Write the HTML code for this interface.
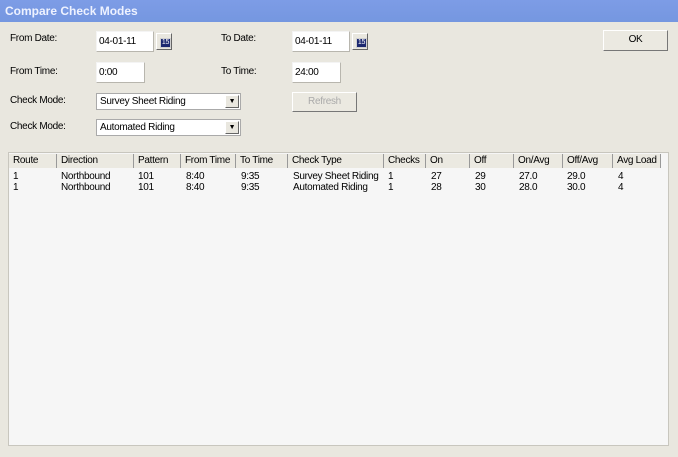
<!DOCTYPE html>
<html><head><style>
body{margin:0;width:678px;height:457px;background:#e9e7df;font-family:"Liberation Sans",sans-serif;font-size:10px;letter-spacing:-0.3px;color:#000;position:relative;overflow:hidden}
.a{position:absolute;white-space:nowrap}
.title{left:0;top:0;width:678px;height:22px;background:linear-gradient(#7d9ce6,#7597e0);color:#eef2ff;font-weight:bold;font-size:12px;line-height:22px;padding-left:5px;box-sizing:border-box;letter-spacing:0}
.in{background:#fff;border:1px solid #b8b6ae;border-top-color:#f4f4f4;border-left-color:#f4f4f4;box-sizing:border-box;padding:4px 0 0 2px;height:21px}
.btn{border:1px solid #fff;border-right-color:#777;border-bottom-color:#777;box-sizing:border-box;text-align:center;line-height:18px;background:#ebe9e1}
.cal{width:16px;height:17px;border:1px solid #fff;border-right-color:#666;border-bottom-color:#666;box-sizing:border-box}
.cal i{position:absolute;left:3px;top:4px;width:9px;height:8px;background:#1c2870;border:1px solid #d0d0d0;font-size:7px;color:#fff;font-style:normal;line-height:8px;text-align:center}
.combo{background:#fff;border:1px solid #aaa;box-sizing:border-box;height:17px;padding:2px 0 0 3px;width:145px}
.combo b{position:absolute;right:1px;top:1px;width:14px;height:13px;background:#e9e7df;border:1px solid #fff;border-right-color:#666;border-bottom-color:#666;box-sizing:border-box;font-size:7px;text-align:center;line-height:11px;font-weight:normal}
.list{left:8px;top:152px;width:661px;height:294px;background:#f6f6f6;border:1px solid #c8c6be;box-sizing:border-box}
.hd{top:1px;height:14px;line-height:14px;border-right:1px solid #999;box-sizing:border-box;padding-left:4px;background:#ebe9e1;overflow:hidden}
.r{height:11px;line-height:11px}
</style></head><body>
<div class="a title">Compare Check Modes</div>
<div class="a" style="left:10px;top:33px">From Date:</div>
<div class="a in" style="left:96px;top:31px;width:58px">04-01-11</div>
<div class="a cal" style="left:156px;top:33px"><i>15</i></div>
<div class="a" style="left:221px;top:33px">To Date:</div>
<div class="a in" style="left:292px;top:31px;width:58px">04-01-11</div>
<div class="a cal" style="left:352px;top:33px"><i>15</i></div>
<div class="a" style="left:10px;top:66px">From Time:</div>
<div class="a in" style="left:96px;top:62px;width:49px">0:00</div>
<div class="a" style="left:221px;top:66px">To Time:</div>
<div class="a in" style="left:292px;top:62px;width:49px">24:00</div>
<div class="a" style="left:10px;top:95px">Check Mode:</div>
<div class="a combo" style="left:96px;top:93px">Survey Sheet Riding<b>▼</b></div>
<div class="a" style="left:10px;top:121px">Check Mode:</div>
<div class="a combo" style="left:96px;top:119px">Automated Riding<b>▼</b></div>
<div class="a btn" style="left:292px;top:92px;width:65px;height:20px;color:#aaa">Refresh</div>
<div class="a btn" style="left:603px;top:30px;width:65px;height:21px">OK</div>
<div class="a list">
<div class="a hd" style="left:0;width:48px">Route</div>
<div class="a hd" style="left:48px;width:77px">Direction</div>
<div class="a hd" style="left:125px;width:47px">Pattern</div>
<div class="a hd" style="left:172px;width:55px">From Time</div>
<div class="a hd" style="left:227px;width:52px">To Time</div>
<div class="a hd" style="left:279px;width:96px">Check Type</div>
<div class="a hd" style="left:375px;width:42px">Checks</div>
<div class="a hd" style="left:417px;width:44px">On</div>
<div class="a hd" style="left:461px;width:44px">Off</div>
<div class="a hd" style="left:505px;width:49px">On/Avg</div>
<div class="a hd" style="left:554px;width:50px">Off/Avg</div>
<div class="a hd" style="left:604px;width:48px">Avg Load</div>
<div class="a r" style="left:4px;top:18px">1</div><div class="a r" style="left:52px;top:18px">Northbound</div><div class="a r" style="left:129px;top:18px">101</div><div class="a r" style="left:177px;top:18px">8:40</div><div class="a r" style="left:232px;top:18px">9:35</div><div class="a r" style="left:284px;top:18px">Survey Sheet Riding</div><div class="a r" style="left:379px;top:18px">1</div><div class="a r" style="left:422px;top:18px">27</div><div class="a r" style="left:466px;top:18px">29</div><div class="a r" style="left:510px;top:18px">27.0</div><div class="a r" style="left:558px;top:18px">29.0</div><div class="a r" style="left:609px;top:18px">4</div>
<div class="a r" style="left:4px;top:29px">1</div><div class="a r" style="left:52px;top:29px">Northbound</div><div class="a r" style="left:129px;top:29px">101</div><div class="a r" style="left:177px;top:29px">8:40</div><div class="a r" style="left:232px;top:29px">9:35</div><div class="a r" style="left:284px;top:29px">Automated Riding</div><div class="a r" style="left:379px;top:29px">1</div><div class="a r" style="left:422px;top:29px">28</div><div class="a r" style="left:466px;top:29px">30</div><div class="a r" style="left:510px;top:29px">28.0</div><div class="a r" style="left:558px;top:29px">30.0</div><div class="a r" style="left:609px;top:29px">4</div>
</div>
</body></html>
